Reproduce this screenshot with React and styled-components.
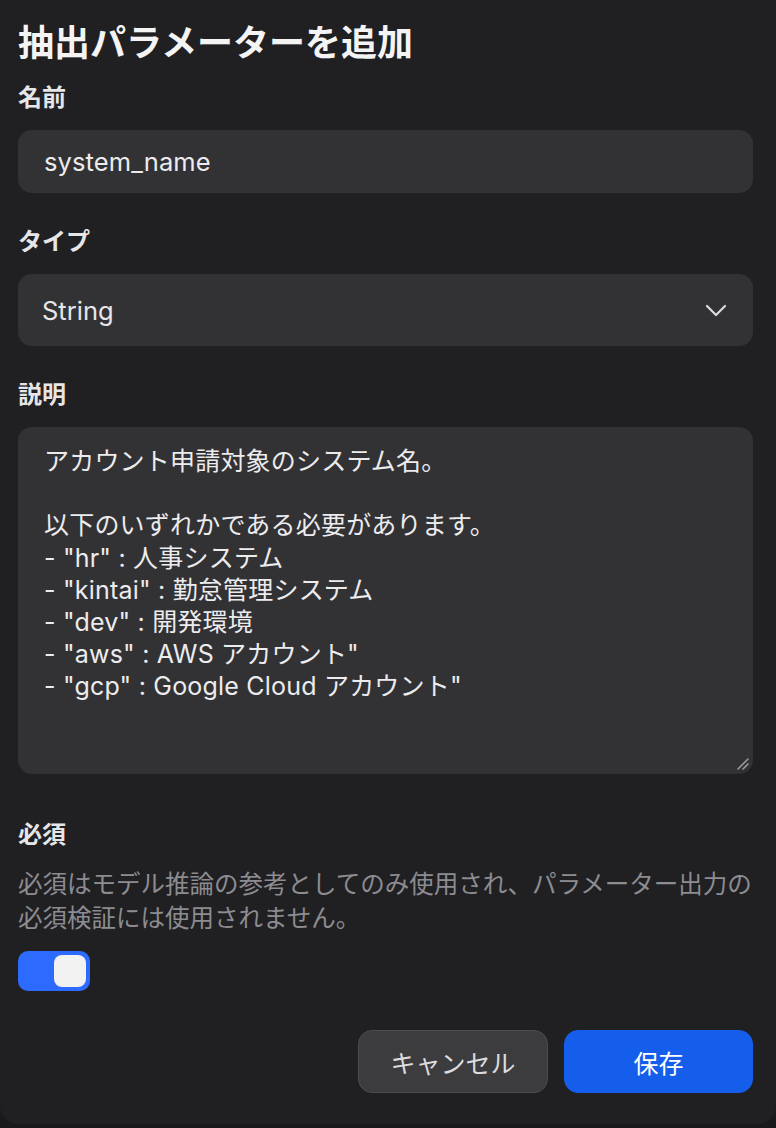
import React, { useState } from 'react';
import styled, { createGlobalStyle } from 'styled-components';

const GlobalStyle = createGlobalStyle`
  html, body {
    margin: 0;
    padding: 0;
    background: #19191b;
  }

  body {
    font-family: Inter, 'Noto Sans CJK JP', sans-serif;
    color: #ececee;
    -webkit-font-smoothing: antialiased;
  }
`;

const Panel = styled.div`
  box-sizing: border-box;
  width: 776px;
  height: 1124px;
  padding: 20px 23px 31px 18px;
  display: flex;
  flex-direction: column;
  background-color: #202023;
  border-radius: 0 0 18px 18px;
`;

const Title = styled.h1`
  margin: 0 0 15px;
  font-size: 36px;
  line-height: 47px;
  font-weight: 700;
  color: #f4f4f5;
`;

const Field = styled.div`
  display: flex;
  flex-direction: column;
  gap: ${({ $gap }) => $gap || 16}px;
  margin-bottom: ${({ $after }) => $after ?? 33}px;
`;

const Label = styled.label`
  font-size: 24px;
  line-height: 32px;
  font-weight: 700;
  color: #e6e6e8;
`;

const Input = styled.input`
  box-sizing: border-box;
  height: 63px;
  width: 100%;
  padding: 0 26px;
  border: none;
  border-radius: 14px;
  outline: none;
  background-color: #323235;
  color: #ececee;
  font-family: inherit;
  font-size: 25.5px;
  letter-spacing: 0.1px;
`;

const SelectBox = styled.div`
  box-sizing: border-box;
  height: 72px;
  padding: 0 26px 0 24px;
  display: flex;
  align-items: center;
  justify-content: space-between;
  border-radius: 14px;
  background-color: #323235;
  font-size: 25.5px;
  color: #e6e6e8;
`;

const TextAreaWrap = styled.div`
  position: relative;
`;

const TextArea = styled.textarea`
  box-sizing: border-box;
  display: block;
  width: 100%;
  height: 347px;
  padding: 18px 26px;
  border: none;
  border-radius: 14px;
  outline: none;
  resize: none;
  background-color: #323235;
  color: #ececee;
  font-family: inherit;
  font-size: 25px;
  line-height: 32.2px;
  letter-spacing: 0.2px;
`;

const Grip = styled.svg`
  position: absolute;
  right: 3px;
  bottom: 3px;
`;

const Help = styled.p`
  margin: 0;
  font-size: 24.5px;
  line-height: 34px;
  color: #8c8c91;
`;

const Toggle = styled.button`
  box-sizing: border-box;
  width: 72px;
  height: 40px;
  padding: 4px;
  display: flex;
  justify-content: ${({ $on }) => ($on ? 'flex-end' : 'flex-start')};
  border: none;
  border-radius: 10px;
  background-color: ${({ $on }) => ($on ? '#2d6bff' : '#48484c')};
  cursor: pointer;
`;

const Knob = styled.span`
  width: 32px;
  height: 32px;
  border-radius: 8px;
  background-color: #f2f2f3;
`;

const Footer = styled.div`
  margin-top: auto;
  display: flex;
  justify-content: flex-end;
  gap: 16px;
`;

const Button = styled.button`
  box-sizing: border-box;
  width: ${({ $primary }) => ($primary ? 189 : 190)}px;
  height: 63px;
  border-radius: 14px;
  border: 1px solid ${({ $primary }) => ($primary ? '#155eec' : '#4c4c50')};
  background-color: ${({ $primary }) => ($primary ? '#155eec' : '#3c3c3f')};
  color: ${({ $primary }) => ($primary ? '#ffffff' : '#dcdcde')};
  font-family: inherit;
  font-size: 25px;
  cursor: pointer;
`;

const description = `アカウント申請対象のシステム名。

以下のいずれかである必要があります。
- "hr" : 人事システム
- "kintai" : 勤怠管理システム
- "dev" : 開発環境
- "aws" : AWS アカウント"
- "gcp" : Google Cloud アカウント"`;

const Chevron = () => (
  <svg width="22" height="14" viewBox="0 0 22 14" fill="none">
    <path d="M2 3l9 9 9-9" stroke="#dcdcde" strokeWidth="2.2" strokeLinecap="round" strokeLinejoin="round" />
  </svg>
);

const App = () => {
  const [required, setRequired] = useState(true);

  return (
    <>
      <GlobalStyle />
      <Panel>
        <Title>抽出パラメーターを追加</Title>

        <Field>
          <Label>名前</Label>
          <Input defaultValue="system_name" />
        </Field>

        <Field>
          <Label>タイプ</Label>
          <SelectBox>
            <span>String</span>
            <Chevron />
          </SelectBox>
        </Field>

        <Field $after={45}>
          <Label>説明</Label>
          <TextAreaWrap>
            <TextArea defaultValue={description} />
            <Grip width="14" height="14" viewBox="0 0 14 14">
              <path d="M2 12L12 2M7 12l5-5" stroke="#9a9a9e" strokeWidth="1.6" strokeLinecap="round" />
            </Grip>
          </TextAreaWrap>
        </Field>

        <Field $after={0}>
          <Label>必須</Label>
          <Help>必須はモデル推論の参考としてのみ使用され、パラメーター出力の必須検証には使用されません。</Help>
          <Toggle $on={required} onClick={() => setRequired(!required)}>
            <Knob />
          </Toggle>
        </Field>

        <Footer>
          <Button>キャンセル</Button>
          <Button $primary>保存</Button>
        </Footer>
      </Panel>
    </>
  );
};

export default App;
